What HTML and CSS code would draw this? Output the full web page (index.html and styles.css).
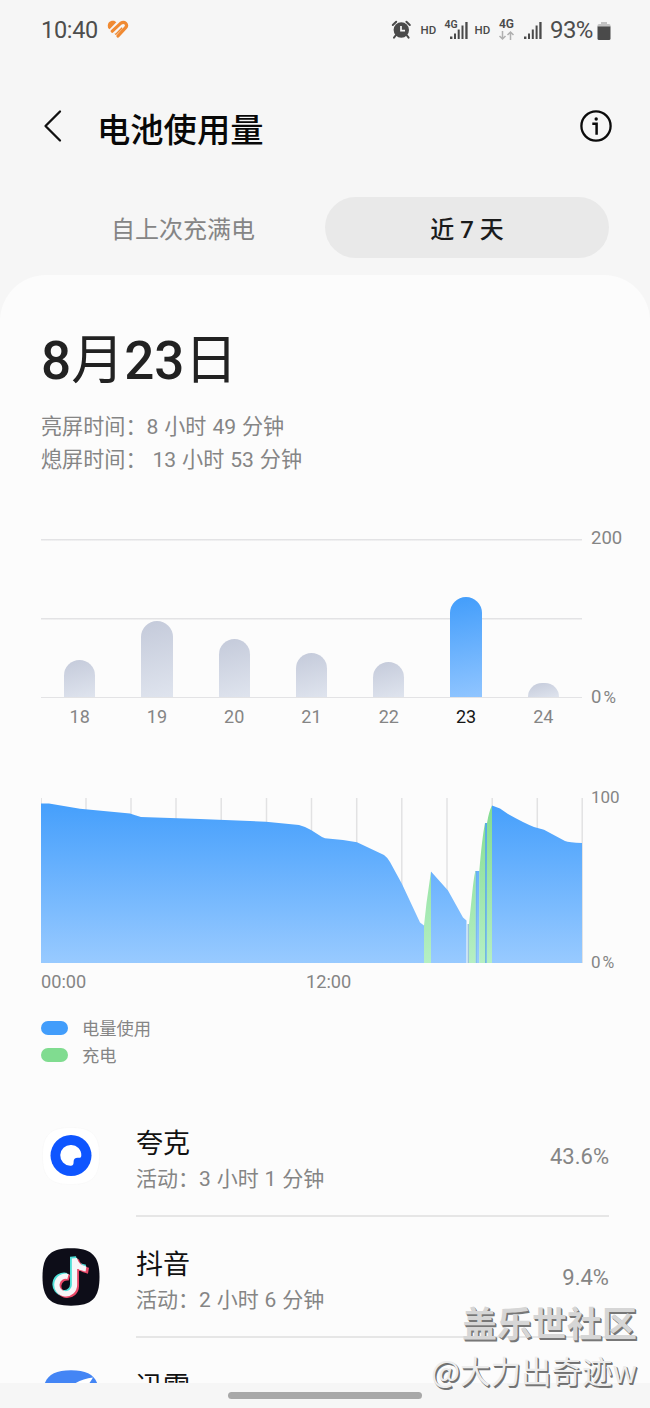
FILE: index.html
```html
<!DOCTYPE html>
<html lang="zh-CN">
<head>
<meta charset="utf-8">
<title>电池使用量</title>
<link rel="stylesheet" href="styles.css">
</head>
<body>
<div class="screen">
  <div class="status">
    <span class="clock">10:40</span>
    <svg class="heart" width="22" height="19" viewBox="0 0 22 19" fill="none" stroke="#f08a32" stroke-linecap="round">
      <path d="M1 7.500C0 3.500 2.500 .8 6 .8c1.500 0 2.500 .6 3.300 1.500L2.600 9.200Q1.300 8.500 1 7.500z" fill="#f08a32" stroke="none"/>
      <path d="M5.300 11.200 13.500 3.400Q16.500 1.400 18.500 3.200Q20.600 5.300 18.600 7.700L11 16" stroke-width="3.200"/>
      <path d="M8.800 13.800 14.300 8.200" stroke-width="2.200"/>
      <path d="M8.200 13 14.500 6.700" stroke="#f7f7f7" stroke-width="1.100"/>
    </svg>
    <svg class="signals" width="150" height="26" viewBox="390 16 150 26" fill="#4a4a4a">
      <circle cx="401.3" cy="30" r="7.7"/>
      <path d="M396 35l-2 2.7M406.600 35l2 2.700M392.800 25l3.400-3.200M409.800 25l-3.400-3.200" stroke="#4a4a4a" stroke-width="2" stroke-linecap="round"/>
      <path d="M401 26v4.700h4" fill="none" stroke="#f7f7f7" stroke-width="1.700"/>
      <text x="420.500" y="33.500" class="sig-hd">HD</text>
      <text x="444.500" y="27.500" class="sig-small">4G</text>
      <path d="M450 36.500h2.400v2.500H450zM454 33.500h2v5.500h-2zM457.700 29.500h2v9.500h-2zM461.500 25.500h2V39h-2zM465.300 22h2.300v17h-2.300z"/>
      <text x="474.500" y="33.500" class="sig-hd">HD</text>
      <text x="499" y="28" class="sig-net">4G</text>
      <path d="M502.500 31v8M499.500 36l3 3 3-3M510.500 40v-8M507.500 35l3-3 3 3" fill="none" stroke="#b0b0b0" stroke-width="1.500"/>
      <path d="M524 36.500h2.400v2.500H524zM528 33.500h2v5.500h-2zM531.800 29.500h2v9.500h-2zM535.600 25.500h2V39h-2z"/>
      <path d="M539.300 22h2.300v17h-2.300z"/>
    </svg>
    <span class="percent">93%</span>
    <svg class="battery" width="14" height="20" viewBox="0 0 14 20"><path d="M4 1h6v2h2q1.500 0 1.500 1.500V6H.5V4.500Q.5 3 2 3h2z" fill="#c2c2c2"/><path d="M.5 5.500h13V17.500q0 1.500-1.500 1.500H2q-1.500 0-1.500-1.500z" fill="#4a4a4a"/></svg>
  </div>

  <header class="appbar">
    <svg class="back" width="20" height="34" viewBox="0 0 20 34" fill="none" stroke="#111" stroke-width="2.300" stroke-linecap="round" stroke-linejoin="round"><path d="M17 2.500 2.500 17 17 31.500"/></svg>
    <h1 class="title">电池使用量</h1>
    <svg class="info" width="34" height="34" viewBox="0 0 34 34" fill="none" stroke="#0b0b0b" stroke-width="2.300"><circle cx="17" cy="17" r="14.600"/><path d="M13.300 14.800h4.300v11" stroke-width="2.500"/><circle cx="17.200" cy="10" r="1.700" fill="#0b0b0b" stroke="none"/></svg>
  </header>

  <nav class="tabs">
    <span class="tab">自上次充满电</span>
    <span class="tab tab-active">近 7 天</span>
  </nav>

  <main class="card">
    <h2 class="date">8<span class="unit">月</span>23<span class="unit">日</span></h2>
    <p class="stat">亮屏时间：8 小时 49 分钟</p>
    <p class="stat">熄屏时间：&nbsp;13 小时 53 分钟</p>

    <section class="week">
      <div class="plot">
        <div class="col"><i class="bar" style="height:37px"></i></div>
        <div class="col"><i class="bar" style="height:76.5px"></i></div>
        <div class="col"><i class="bar" style="height:58px"></i></div>
        <div class="col"><i class="bar" style="height:44.500px"></i></div>
        <div class="col"><i class="bar" style="height:35px"></i></div>
        <div class="col"><i class="bar bar-on" style="height:100.500px"></i></div>
        <div class="col"><i class="bar" style="height:14px"></i></div>
      </div>
      <div class="scale"><span>200</span><span>0<small>%</small></span></div>
      <div class="days"><span>18</span><span>19</span><span>20</span><span>21</span><span>22</span><span class="today">23</span><span>24</span></div>
    </section>

    <section class="day">
      <svg class="area" width="542" height="166" viewBox="41 798 542 166">
        <defs>
          <linearGradient id="use" gradientUnits="userSpaceOnUse" x1="0" y1="803" x2="0" y2="963"><stop offset="0" stop-color="#459ffc"/><stop offset="1" stop-color="#98caff"/></linearGradient>
          <linearGradient id="charge" gradientUnits="userSpaceOnUse" x1="0" y1="803" x2="0" y2="963"><stop offset="0" stop-color="#82dc90"/><stop offset="1" stop-color="#b5efc3"/></linearGradient>
        </defs>
        <path d="M41.200 798v165M86 798v165M131 798v165M176 798v165M221.200 798v165M266.500 798v165M311.500 798v165M356.700 798v165M401.800 798v165M447 798v165M492.200 798v165M537.300 798v165M582.200 798v165" stroke="#e2e2e3" stroke-width="1.500"/>
        <path d="M40.500 803.500H49L80 808.800 130 813.500Q135 815 141 817L200 819 266 821.700 299 825Q305 826.500 311 830L322 837 325 838.300 343 840 357 842.300 384 855Q387 857 390 862L402 884 420 922.500 424 925.500V963H40.500zM431 871.500 448 890.500 463 917.500 466.500 920.500V963H431zM475.500 871h4v92h-4zM485 823h2v140h-2zM492 805.500 500 808.500 508 814Q524 823 534 827L544 829.800 565 841Q569 842.700 582 843V963H492z" fill="url(#use)"/>
        <path d="M467.500 924h2v39h-2z" fill="#9bc5da"/>
        <path d="M475.500 871h1v92h-1zM485 823h1.500v140H485z" fill="#61b5cd" opacity=".7"/>
        <path d="M424 925.500 426.500 903 431 871.500V963H424zM469 924 472 895Q474 875 475.500 871V963H469zM479.300 871Q482 838 485 823V963H479.300zM487 823Q489 811 492 805.500V963H487z" fill="url(#charge)"/>
      </svg>
      <div class="scale scale-day"><span>100</span><span>0<small>%</small></span></div>
      <div class="hours"><span>00:00</span><span>12:00</span></div>
    </section>

    <ul class="legend">
      <li><i class="swatch use"></i>电量使用</li>
      <li><i class="swatch charge"></i>充电</li>
    </ul>

    <ul class="apps">
      <li class="app">
        <svg class="icon" width="58" height="58" viewBox="0 0 58 58"><path d="M29 .5C50 .5 57.500 8 57.500 29S50 57.500 29 57.500.5 50 .5 29 8 .5 29 .5z" fill="#fff" stroke="#f7f7f7" stroke-width=".6"/><circle cx="29" cy="28.500" r="20.500" fill="#0e55ff"/><path d="M29 18a10 10 0 0 1 10.300 10.500c0 2-1 2.500-3 2.200-3-.2-4.700 1-4.700 4 0 2.800-.5 4-3.400 4A10.300 10.300 0 0 1 29 18z" fill="#fff"/></svg>
        <div class="row"><div><div class="name">夸克</div><div class="active">活动：3 小时 1 分钟</div></div><span class="share">43.6%</span></div>
      </li>
      <li class="app">
        <svg class="icon" width="58" height="58" viewBox="0 0 58 58"><path d="M29 .3C50 .3 57.500 8 57.500 29S50 57.700 29 57.700.5 50 .5 29 8 .3 29 .3z" fill="#0d0d18"/>
          <g fill="none" stroke-width="6"><path d="M26 28.500A8.800 8.800 0 1 0 32.500 37V9.500Q34 18.500 45 20.500" stroke="#4fe0d8" transform="translate(-1.500 -.7)"/><path d="M26 28.500A8.800 8.800 0 1 0 32.500 37V10.500Q34 19.500 45 21.500" stroke="#e94868" transform="translate(1.500 1.200)"/><path d="M26 28.500A8.800 8.800 0 1 0 32.500 37V10.500Q34 19.500 44 21" stroke="#f6f6f8" stroke-width="5.300"/></g></svg>
        <div class="row"><div><div class="name">抖音</div><div class="active">活动：2 小时 6 分钟</div></div><span class="share">9.4%</span></div>
      </li>
      <li class="app">
        <svg class="icon" width="58" height="58" viewBox="0 0 58 58"><path d="M29 .3C50 .3 57.500 8 57.500 29S50 57.700 29 57.700.5 50 .5 29 8 .3 29 .3z" fill="#4385f5"/><path d="M32 14Q40 9 51 7.500L45 17H32z" fill="#fff"/></svg>
        <div class="row"><div class="name">迅雷</div></div>
      </li>
    </ul>
  </main>
  <footer class="navbar"><i class="handle"></i></footer>
  <div class="mark"><div class="mark-site">盖乐世社区</div><div class="mark-user">@大力出奇迹w</div></div>
</div>
</body>
</html>
```

FILE: styles.css
```css
* { box-sizing: border-box; margin: 0; padding: 0; }
body { width: 650px; height: 1408px; overflow: hidden; background: #f6f6f6; font-family: Roboto, "Noto Sans CJK SC", sans-serif; color: #858585; }
ul { list-style: none; }
svg { display: block; flex: none; }
.screen { position: relative; width: 650px; height: 1408px; display: flex; flex-direction: column; overflow: hidden; }

.status { height: 60px; padding: 0 39px 0 41px; display: flex; align-items: center; color: #4d4d4d; font-size: 24px; flex: none; }
.clock { font-size: 23.500px; width: 66px; letter-spacing: -.3px; margin-top: -1px; }
.heart { margin-top: -1px; }
.signals { margin: -2px 0 0 auto; overflow: visible; }
.sig-hd { font-size: 11.500px; font-weight: 500; }
.sig-small { font-size: 10.500px; font-weight: 600; }
.sig-net { font-size: 12px; font-weight: 600; }
.percent { margin: -1px 0 0 10px; width: 47px; letter-spacing: -.6px; }
.battery { margin-top: 1px; }

.appbar { height: 137px; flex: none; display: flex; padding: 0 37px 0 43px; }
.back { margin-top: 49px; }
.title { margin: 47px 0 0 34px; font-size: 33.300px; line-height: 48px; font-weight: 500; color: #080808; }
.info { margin: 49px 0 0 auto; }

.tabs { height: 61px; flex: none; display: grid; grid-template-columns: 284px 284px; grid-template-rows: 61px; padding-left: 41px; }
.tab { text-align: center; font-size: 24px; line-height: 67px; border-radius: 31px; }
.tab-active { background: #e9e9e9; color: #1b1b1b; font-weight: 500; }

.card { margin-top: 17px; height: 1108px; flex: none; overflow: hidden; background: #fcfcfc; border-radius: 46px 46px 0 0; padding: 56px 41px 0; }
.date { font-size: 53px; line-height: 60px; font-weight: 500; color: #222; margin-bottom: 20px; }
.unit { font-weight: 400; }
.stat { font-size: 21.100px; line-height: 32.500px; word-spacing: .7px; }

.week { margin-top: 63px; display: grid; grid-template-columns: 541px 40px; column-gap: 9px; width: 590px; }
.plot { height: 159px; display: flex; align-items: flex-end; padding-bottom: 1px; background: linear-gradient(#e3e3e5, #e3e3e5) 0 0 / 100% 1.500px no-repeat, linear-gradient(#e3e3e5, #e3e3e5) 0 78.500px / 100% 1.500px no-repeat, linear-gradient(#e3e3e5, #e3e3e5) 0 157.500px / 100% 1.500px no-repeat; }
.col { flex: 1; display: flex; justify-content: center; }
.bar { width: 31.400px; border-radius: 16px 16px 0 0; background: linear-gradient(165deg, #c4cada, #dfe4ee); }
.bar-on { background: linear-gradient(170deg, #429dfb, #90c5ff); }
.scale { display: flex; flex-direction: column; justify-content: space-between; font-size: 18.500px; line-height: 22px; margin: -12px 0 -10px; }
.scale small { font-size: 17px; margin-left: 2px; }
.days { display: flex; font-size: 18px; line-height: 22px; margin-top: 8px; }
.days span { flex: 1; text-align: center; }
.today { color: #161616; }

.day { margin-top: 70px; display: grid; grid-template-columns: 541px 40px; column-gap: 9px; width: 590px; }
.scale-day { font-size: 17px; }
.scale-day small { font-size: 16px; }
.hours { display: grid; grid-template-columns: 265px 100px; font-size: 18.200px; line-height: 22px; margin-top: 7px; }

.legend { margin-top: 23px; }
.legend li { display: flex; align-items: center; height: 27px; font-size: 17.300px; line-height: 27px; }
.swatch { width: 27px; height: 14px; border-radius: 7px; margin: -4px 14px 0 0; }
.use { background: #429dfb; }
.charge { background: #80dc90; }

.apps { margin-top: 51px; }
.app { height: 121.300px; display: flex; gap: 36px; padding-left: 1px; }
.icon { margin-top: 6px; }
.row { flex: 1; height: 95.500px; display: flex; justify-content: space-between; border-bottom: 2px solid #e6e6e6; }
.name { font-size: 27px; line-height: 38px; color: #111; margin-top: 4px; }
.active { font-size: 21px; line-height: 32px; margin-top: 0; word-spacing: .7px; white-space: nowrap; }
.share { font-size: 22px; line-height: 32px; margin-top: 20px; }

.navbar { height: 25px; flex: none; background: #f6f6f6; padding: 9px 0 0 228px; }
.handle { display: block; width: 194px; height: 7px; border-radius: 4px; background: #a8a8a8; }

.mark { position: absolute; right: 13px; top: 1303px; text-align: right; white-space: nowrap; }
.mark-site { font-size: 35px; line-height: 46px; font-weight: 700; color: #d6d6d6; text-shadow: 1px 1px 0 #777, 1.500px 1.500px 0 #777; }
.mark-user { font-size: 30.500px; line-height: 42px; font-family: "Noto Sans CJK SC", sans-serif; color: #ededed; text-shadow: 1px 1px 0 #707070, 1.500px 1.500px 0 #777; }
```
